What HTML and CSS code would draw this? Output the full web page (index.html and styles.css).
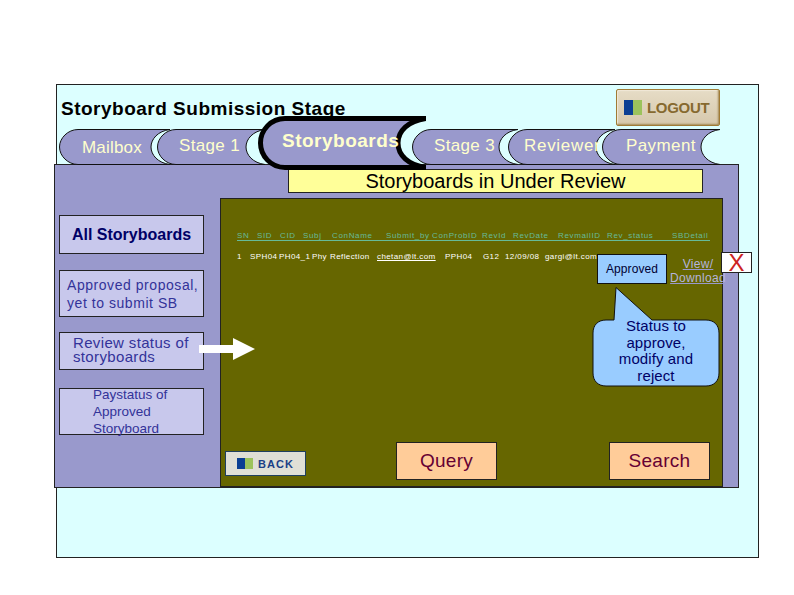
FILE: index.html
```html
<!DOCTYPE html>
<html>
<head>
  <meta charset="UTF-8">
  <title>Storyboard Submission Stage</title>
  <link rel="stylesheet" href="styles.css">
</head>
<body>
  <div class="slide">
    <div class="top">
      <h1 class="title">Storyboard Submission Stage</h1>
      <a class="logout">
        <span class="logo"><i class="logo-blue"></i><i class="logo-green"></i></span>
        LOGOUT
      </a>
    </div>

    <div class="tabs">
      <div class="tab tab-mailbox">
        <svg class="tab-bg" width="111" height="36" viewBox="0 0 111 36"><path d="M19 .5H111C99 2 92 10 92 18s7 16 19 17.500H19C9 35.500 .5 27 .5 18S9 .5 19 .5Z"/></svg>
        <span>Mailbox</span>
      </div>
      <div class="tab tab-one">
        <svg class="tab-bg" width="108" height="36" viewBox="0 0 108 36"><path d="M19 .5H108C96 2 89 10 89 18s7 16 19 17.500H19C9 35.500 .5 27 .5 18S9 .5 19 .5Z"/></svg>
        <span>Stage 1</span>
      </div>
      <div class="tab tab-active">
        <svg class="tab-bg" width="168" height="54" viewBox="0 0 168 54"><path d="M27 2.500H168C150 5 140 15 140 27s10 22 28 24.500H27C13 51.500 2.500 40 2.500 27S13 2.500 27 2.500Z"/></svg>
        <span>Storyboards</span>
      </div>
      <div class="tab tab-three">
        <svg class="tab-bg" width="106" height="36" viewBox="0 0 106 36"><path d="M19 .5H106C94 2 87 10 87 18s7 16 19 17.500H19C9 35.500 .5 27 .5 18S9 .5 19 .5Z"/></svg>
        <span>Stage 3</span>
      </div>
      <div class="tab tab-reviewer">
        <svg class="tab-bg" width="107" height="36" viewBox="0 0 107 36"><path d="M19 .5H107C95 2 88 10 88 18s7 16 19 17.500H19C9 35.500 .5 27 .5 18S9 .5 19 .5Z"/></svg>
        <span>Reviewer</span>
      </div>
      <div class="tab tab-payment">
        <svg class="tab-bg" width="118" height="36" viewBox="0 0 118 36"><path d="M19 .5H118C106 2 99 10 99 18s7 16 19 17.500H19C9 35.500 .5 27 .5 18S9 .5 19 .5Z"/></svg>
        <span>Payment</span>
      </div>
    </div>

    <div class="panel">
      <div class="heading">Storyboards in Under Review</div>
      <div class="columns">
        <div class="side">
          <div class="side-item side-all">All Storyboards</div>
          <div class="side-item side-approved">Approved proposal,<br>yet to submit SB</div>
          <div class="side-item side-review">Review status of<br>storyboards</div>
          <div class="side-item side-pay"><div class="pay-text">Paystatus of<br>Approved<br>Storyboard</div></div>
        </div>

        <div class="main">
          <div class="head-row">
            <span class="c-sn">SN</span><span class="c-sid">SID</span><span class="c-cid">CID</span><span class="c-subj">Subj</span><span class="c-name">ConName</span><span class="c-by">Submit_by</span><span class="c-prob">ConProbID</span><span class="c-rev">RevId</span><span class="c-date">RevDate</span><span class="c-mail">RevmailID</span><span class="c-status">Rev_status</span><span>SBDetail</span>
          </div>
          <div class="data-row">
            <span class="d-sn">1</span><span class="d-sid">SPH04</span><span class="d-cid">PH04_1</span><span class="d-subj">Phy</span><span class="d-name">Reflection</span><span class="d-mail">chetan@lt.com</span><span class="d-prob">PPH04</span><span class="d-rev">G12</span><span class="d-date">12/09/08</span><span>gargi@lt.com</span>
          </div>

          <div class="buttons">
            <a class="back">
              <span class="logo"><i class="logo-blue"></i><i class="logo-green"></i></span>
              BACK
            </a>
            <a class="action action-query">Query</a>
            <a class="action action-search">Search</a>
          </div>

          <div class="approved">Approved</div>
          <a class="view">View/<br>Download</a>
          <div class="close">X</div>
          <div class="callout">
            <svg class="callout-bg" width="128" height="100" viewBox="0 0 128 100"><path d="M24 .5 60 33H114C122 33 127 38 127 46V86C127 94 122 99 114 99H14C6 99 1 94 1 86V46C1 38 6 33 14 33H22Z"/></svg>
            <p>Status to<br>approve,<br>modify and<br>reject</p>
          </div>
        </div>

        <svg class="arrow" width="56" height="22" viewBox="0 0 56 22"><path d="M0 7H34V0L56 11 34 22V15H0Z"/></svg>
      </div>
    </div>
  </div>
</body>
</html>
```

FILE: styles.css
```css
body {
  margin: 0;
  background-color: #fff;
  font-family: "Liberation Sans", Arial, sans-serif;
}
a {
  cursor: pointer;
}
.slide {
  box-sizing: border-box;
  width: 703px;
  height: 474px;
  margin: 84px 0 0 56px;
  border: 1px solid #222;
  background-color: #dcffff;
}

/* title row */
.top {
  display: flex;
  justify-content: space-between;
  height: 40px;
  padding: 4px 38px 0 4px;
}
.title {
  margin: 9px 0 0 0;
  height: 22px;
  font-size: 19px;
  line-height: 22px;
  letter-spacing: 0.5px;
  font-weight: bold;
  color: #000;
}
.logout {
  display: flex;
  align-items: center;
  gap: 5px;
  box-sizing: border-box;
  width: 104px;
  height: 37px;
  padding-left: 7px;
  border: 1px solid #a07b35;
  border-radius: 2px;
  background: linear-gradient(#e6dcc6, #d6c8ac);
  box-shadow: inset -1px -1px 2px #a58a55, inset 1px 1px 1px #f6efe0;
  font-size: 15px;
  font-weight: bold;
  letter-spacing: -0.3px;
  color: #86692f;
}
.logo {
  display: flex;
  height: 15px;
}
.logo-blue {
  width: 9px;
  background-color: #0b3f93;
}
.logo-green {
  width: 9px;
  background-color: #9cc35c;
}

/* tabs */
.tabs {
  position: relative;
  z-index: 2;
  display: flex;
  height: 36px;
  margin-left: 2px;
}
.tab {
  position: relative;
  flex: none;
  box-sizing: border-box;
  height: 36px;
  color: #ffffcc;
  font-size: 17px;
  letter-spacing: 0.2px;
}
.tab span {
  position: relative;
}
.tab-bg {
  position: absolute;
  top: 0;
  left: 0;
  display: block;
  fill: #9999cc;
  stroke: #111;
  stroke-width: 1;
}
.tab-mailbox {
  width: 111px;
  margin-right: -13px;
  padding-left: 23px;
  line-height: 37px;
}
.tab-one {
  width: 108px;
  margin-right: -7px;
  padding-left: 22px;
  line-height: 33px;
  letter-spacing: 0.35px;
}
.tab-active {
  width: 168px;
  height: 54px;
  margin: -13px -14px -5px 0;
  padding-left: 24px;
  font-size: 19px;
  line-height: 50px;
  letter-spacing: 0.5px;
  font-weight: bold;
}
.tab-active .tab-bg {
  stroke: #000;
  stroke-width: 5;
}
.tab-three {
  width: 106px;
  margin-right: -10px;
  padding-left: 22px;
  line-height: 33px;
  letter-spacing: 0.35px;
}
.tab-reviewer {
  width: 107px;
  margin-right: -13px;
  padding-left: 16px;
  line-height: 33px;
  letter-spacing: 0.7px;
}
.tab-payment {
  width: 118px;
  padding-left: 24px;
  line-height: 34px;
  letter-spacing: 0.4px;
}

/* main panel */
.panel {
  box-sizing: border-box;
  width: 685px;
  height: 324px;
  margin: -1px 0 0 -3px;
  padding-top: 4px;
  border: 1px solid #222;
  background-color: #9999cc;
}
.heading {
  box-sizing: border-box;
  width: 415px;
  height: 24px;
  margin-left: 233px;
  border: 1px solid #222;
  background-color: #ffff99;
  color: #000;
  font-size: 20px;
  line-height: 22px;
  text-align: center;
}
.columns {
  position: relative;
  display: flex;
  gap: 16px;
  margin-top: 5px;
  padding-left: 4px;
}
.side {
  display: flex;
  flex-direction: column;
  width: 145px;
  padding-top: 17px;
  color: #333399;
}
.side-item {
  box-sizing: border-box;
  border: 1px solid #222;
  background-color: #c8c8ec;
  font-size: 14px;
}
.side-all {
  height: 39px;
  margin-bottom: 16px;
  color: #000066;
  font-size: 16px;
  font-weight: bold;
  line-height: 37px;
  text-align: center;
}
.side-approved {
  height: 47px;
  margin-bottom: 15px;
  padding: 5px 0 0 7px;
  line-height: 18px;
  letter-spacing: 0.55px;
}
.side-review {
  height: 38px;
  margin-bottom: 18px;
  padding: 3px 0 0 13px;
  font-size: 15px;
  line-height: 14px;
  letter-spacing: 0.35px;
}
.side-pay {
  height: 47px;
  padding-left: 33px;
  font-size: 13.5px;
  line-height: 17px;
}
.pay-text {
  margin-top: -3px;
}

/* olive area */
.main {
  position: relative;
  box-sizing: border-box;
  width: 503px;
  height: 289px;
  border: 1px solid #222;
  background-color: #666600;
  font-size: 8px;
  letter-spacing: 0.65px;
}
.head-row {
  display: flex;
  box-sizing: border-box;
  width: 473px;
  height: 10px;
  margin: 32px 0 0 16px;
  border-bottom: 1px solid #66bb99;
  color: #66bb99;
  line-height: 9px;
}
.c-sn { width: 20px; }
.c-sid { width: 23px; }
.c-cid { width: 23px; }
.c-subj { width: 29px; }
.c-name { width: 54px; }
.c-by { width: 46px; }
.c-prob { width: 50px; }
.c-rev { width: 31px; }
.c-date { width: 45px; }
.c-mail { width: 49px; }
.c-status { width: 65px; }
.data-row {
  display: flex;
  margin: 11px 0 0 16px;
  color: #fff;
  letter-spacing: 0.4px;
  line-height: 10px;
}
.d-sn { width: 13px; }
.d-sid { width: 29px; }
.d-cid { width: 33px; }
.d-subj { width: 18px; }
.d-name { width: 47px; }
.d-mail { width: 68px; text-decoration: underline; }
.d-prob { width: 38px; }
.d-rev { width: 22px; }
.d-date { width: 40px; }

.buttons {
  position: absolute;
  left: 4px;
  bottom: 6px;
  display: flex;
  align-items: flex-end;
}
.back {
  display: flex;
  align-items: center;
  justify-content: center;
  gap: 5px;
  box-sizing: border-box;
  width: 81px;
  height: 25px;
  margin: 0 90px 4px 0;
  border: 1px solid #1f3f5f;
  background-color: #dfdfd6;
  color: #1b3f86;
  font-size: 11px;
  font-weight: bold;
  letter-spacing: 1px;
}
.back .logo {
  height: 11px;
}
.back .logo-blue,
.back .logo-green {
  width: 8px;
}
.action {
  box-sizing: border-box;
  width: 101px;
  height: 38px;
  border: 1px solid #222;
  background-color: #ffcc99;
  color: #660033;
  font-size: 19px;
  letter-spacing: 0.3px;
  line-height: 36px;
  text-align: center;
}
.action-query {
  margin-right: 112px;
}

/* things lying over the table */
.approved {
  position: absolute;
  top: 55px;
  left: 376px;
  box-sizing: border-box;
  width: 70px;
  height: 30px;
  border: 1px solid #111;
  background-color: #99ccff;
  color: #000033;
  font-size: 12px;
  letter-spacing: 0.1px;
  line-height: 28px;
  text-align: center;
}
.view {
  position: absolute;
  top: 58px;
  left: 447px;
  width: 60px;
  color: #b5b5dd;
  font-size: 12px;
  letter-spacing: 0.3px;
  line-height: 14px;
  text-align: center;
  text-decoration: underline #9999cc;
}
.close {
  position: absolute;
  top: 53px;
  left: 500px;
  box-sizing: border-box;
  width: 31px;
  height: 21px;
  border: 1px solid #222;
  background-color: #fff;
  color: #cc2222;
  font-size: 24px;
  letter-spacing: 0;
  line-height: 20px;
  text-align: center;
}
.callout {
  position: absolute;
  top: 88px;
  left: 371px;
  width: 128px;
  height: 100px;
}
.callout-bg {
  position: absolute;
  top: 0;
  left: 0;
  fill: #99ccff;
  stroke: #111;
  stroke-width: 1;
}
.callout p {
  position: relative;
  margin: 31px 0 0 0;
  color: #000066;
  font-size: 15px;
  letter-spacing: 0.1px;
  line-height: 16.500px;
  text-align: center;
}
.arrow {
  position: absolute;
  top: 140px;
  left: 144px;
  fill: #fff;
}
```
